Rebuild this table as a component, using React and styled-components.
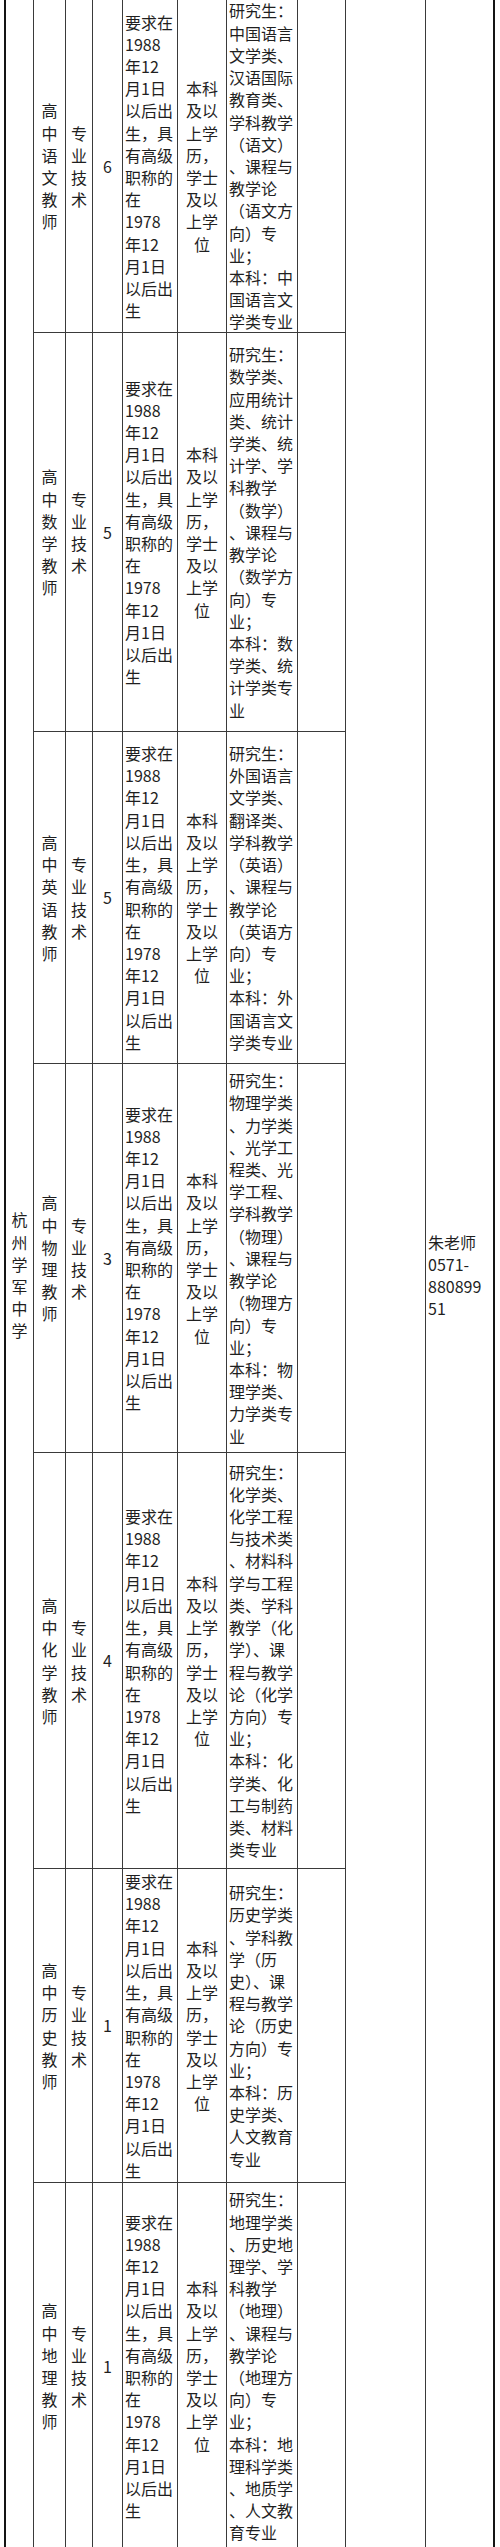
import React from "react";
import styled, { createGlobalStyle } from "styled-components";

const GlobalStyle = createGlobalStyle`
  html, body {
    margin: 0;
    padding: 0;
    background: #fff;
    overflow: hidden;
  }
  body {
    font-family: "Noto Sans CJK SC", "Noto Sans", sans-serif;
    color: #1f1f1f;
  }
`;

const Page = styled.div`
  padding: 0 5px 0 4px;
`;

const Sheet = styled.div`
  display: grid;
  width: 491px;
  box-sizing: border-box;
  grid-template-columns: 28px 32px 27px 30px 55px 49px 71px 48px 80px 67px;
  grid-template-rows: ${(p) => p.$rows};
  border-left: 2px solid #141414;
  border-right: 2px solid #141414;
  font-size: 16px;
  line-height: 22.2px;
`;

const Cell = styled.div`
  box-sizing: border-box;
  display: grid;
  align-content: center;
  text-align: ${(p) => (p.$left ? "left" : "center")};
  padding: ${(p) => (p.$left ? "0 0 0 2px" : "0")};
  white-space: pre;
  border-right: ${(p) => (p.$noRight ? "none" : "1px solid #3a3a3a")};
  border-bottom: ${(p) => (p.$noBottom ? "none" : "1px solid #3a3a3a")};
`;

const SpanCell = styled(Cell)`
  grid-row: 1 / -1;
  grid-column: ${(p) => p.$col};
`;

const AGE = [
  "要求在", "1988", "年12", "月1日", "以后出", "生，具", "有高级",
  "职称的", "在", "1978", "年12", "月1日", "以后出", "生",
];

const EDU = ["本科", "及以", "上学", "历，", "学士", "及以", "上学", "位"];

const posts = [
  {
    name: "高中语文教师",
    count: 6,
    height: 333,
    major: [
      "研究生：", "中国语言", "文学类、", "汉语国际", "教育类、", "学科教学",
      "（语文）", "、课程与", "教学论", "（语文方", "向）专", "业；",
      "本科：中", "国语言文", "学类专业",
    ],
  },
  {
    name: "高中数学教师",
    count: 5,
    height: 399,
    major: [
      "研究生：", "数学类、", "应用统计", "类、统计", "学类、统", "计学、学",
      "科教学", "（数学）", "、课程与", "教学论", "（数学方", "向）专",
      "业；", "本科：数", "学类、统", "计学类专", "业",
    ],
  },
  {
    name: "高中英语教师",
    count: 5,
    height: 332,
    major: [
      "研究生：", "外国语言", "文学类、", "翻译类、", "学科教学", "（英语）",
      "、课程与", "教学论", "（英语方", "向）专", "业；", "本科：外",
      "国语言文", "学类专业",
    ],
  },
  {
    name: "高中物理教师",
    count: 3,
    height: 389,
    major: [
      "研究生：", "物理学类", "、力学类", "、光学工", "程类、光", "学工程、",
      "学科教学", "（物理）", "、课程与", "教学论", "（物理方", "向）专",
      "业；", "本科：物", "理学类、", "力学类专", "业",
    ],
  },
  {
    name: "高中化学教师",
    count: 4,
    height: 416,
    major: [
      "研究生：", "化学类、", "化学工程", "与技术类", "、材料科", "学与工程",
      "类、学科", "教学（化", "学）、课", "程与教学", "论（化学", "方向）专",
      "业；", "本科：化", "学类、化", "工与制药", "类、材料", "类专业",
    ],
  },
  {
    name: "高中历史教师",
    count: 1,
    height: 314,
    major: [
      "研究生：", "历史学类", "、学科教", "学（历", "史）、课", "程与教学",
      "论（历史", "方向）专", "业；", "本科：历", "史学类、", "人文教育",
      "专业",
    ],
  },
  {
    name: "高中地理教师",
    count: 1,
    height: 367,
    major: [
      "研究生：", "地理学类", "、历史地", "理学、学", "科教学", "（地理）",
      "、课程与", "教学论", "（地理方", "向）专", "业；", "本科：地",
      "理科学类", "、地质学", "、人文教", "育专业",
    ],
  },
];

const lines = (text) => text.split("").join("\n");

export default function App() {
  const rows = posts.map((p) => `${p.height}px`).join(" ");

  return (
    <>
      <GlobalStyle />
      <Page>
        <Sheet $rows={rows}>
          <SpanCell $col={1} $noBottom>
            {lines("杭州学军中学")}
          </SpanCell>
          <SpanCell $col={9} $noBottom />
          <SpanCell $col={10} $left $noRight $noBottom>
            {"朱老师\n0571-\n880899\n51"}
          </SpanCell>

          {posts.map((p) => (
            <React.Fragment key={p.name}>
              <Cell>{lines(p.name)}</Cell>
              <Cell>{lines("专业技术")}</Cell>
              <Cell>{p.count}</Cell>
              <Cell $left>{AGE.join("\n")}</Cell>
              <Cell>{EDU.join("\n")}</Cell>
              <Cell $left>{p.major.join("\n")}</Cell>
              <Cell />
            </React.Fragment>
          ))}
        </Sheet>
      </Page>
    </>
  );
}
